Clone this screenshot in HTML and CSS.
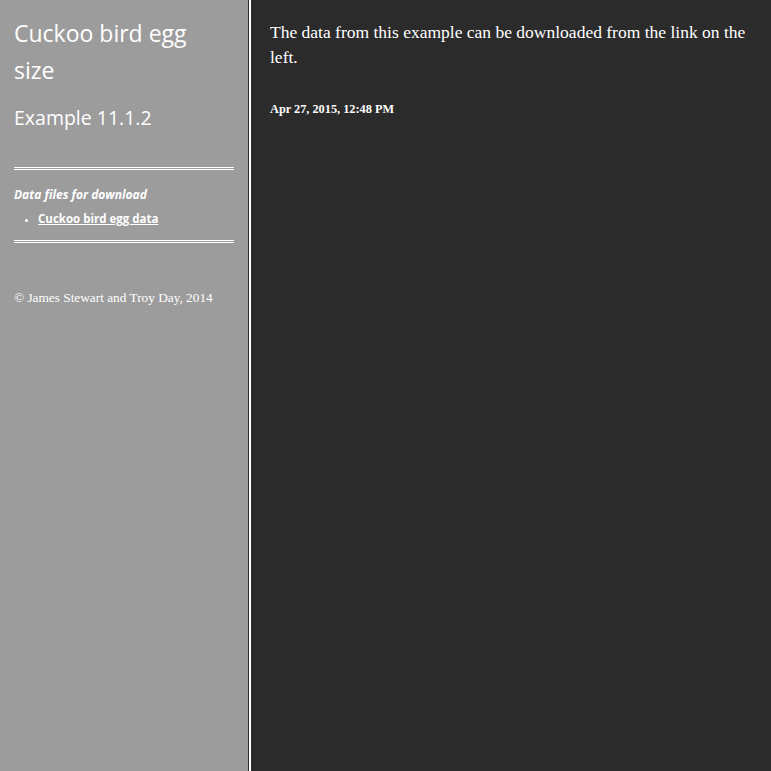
FILE: index.html
```html
<!DOCTYPE html>
<html>
<head>
<meta charset="utf-8">
<link rel="stylesheet" href="styles.css">
</head>
<body>
<div class="layout">
  <aside class="sidebar">
    <h1 class="title">Cuckoo bird egg size</h1>
    <h2 class="subtitle">Example 11.1.2</h2>
    <hr class="rule">
    <div class="files">
      <p class="files-head">Data files for download</p>
      <ul class="file-list">
        <li><a href="#">Cuckoo bird egg data</a></li>
      </ul>
    </div>
    <hr class="rule">
    <p class="copy">© James Stewart and Troy Day, 2014</p>
  </aside>
  <main class="content">
    <p class="lead">The data from this example can be downloaded from the link on the left.</p>
    <p class="date">Apr 27, 2015, 12:48 PM</p>
  </main>
</div>
</body>
</html>
```
FILE: styles.css
```css
html, body {
  margin: 0;
  padding: 0;
  height: 100%;
  background: #2b2b2b;
}
.layout {
  display: flex;
  min-height: 771px;
}
.sidebar {
  width: 220px;
  flex: none;
  background: #9c9c9c;
  padding: 0 14px;
  border-right: 1px solid #2b2b2b;
  box-shadow: 2px 0 0 #ffffff;
  margin-right: 2px;
  color: #ffffff;
  font-family: "Open Sans", "DejaVu Sans", sans-serif;
}
.title {
  margin: 15px 0 0;
  padding-right: 30px;
  font-size: 23px;
  font-weight: normal;
  line-height: 37px;
}
.subtitle {
  margin: 14px 0 0;
  font-size: 19.5px;
  font-weight: normal;
  line-height: 30px;
}
.rule {
  border: 0;
  border-top: 3px double #ffffff;
  margin: 0;
  height: 0;
}
.sidebar .rule:first-of-type {
  margin-top: 34px;
}
.files {
  padding: 16px 0 12px;
}
.files-head {
  margin: 0;
  font-size: 12px;
  font-style: italic;
  font-weight: bold;
  line-height: 18px;
}
.file-list {
  margin: 6px 0 0;
  padding-left: 24px;
  font-size: 11.5px;
  font-weight: bold;
  line-height: 18px;
}
.file-list li::marker {
  font-size: 9px;
}
.file-list a {
  color: #ffffff;
  text-decoration: underline;
}
.copy {
  margin: 47px 0 0;
  font-family: "Liberation Serif", "Times New Roman", serif;
  font-size: 13.3px;
  line-height: 16px;
}
.content {
  flex: 1;
  padding: 20px 10px 0 19px;
  color: #ffffff;
  font-family: "Liberation Serif", "Times New Roman", serif;
}
.lead {
  margin: 0;
  font-size: 17.5px;
  line-height: 25px;
}
.date {
  margin: 31px 0 0;
  font-size: 12.3px;
  font-weight: bold;
  line-height: 16px;
}
```
